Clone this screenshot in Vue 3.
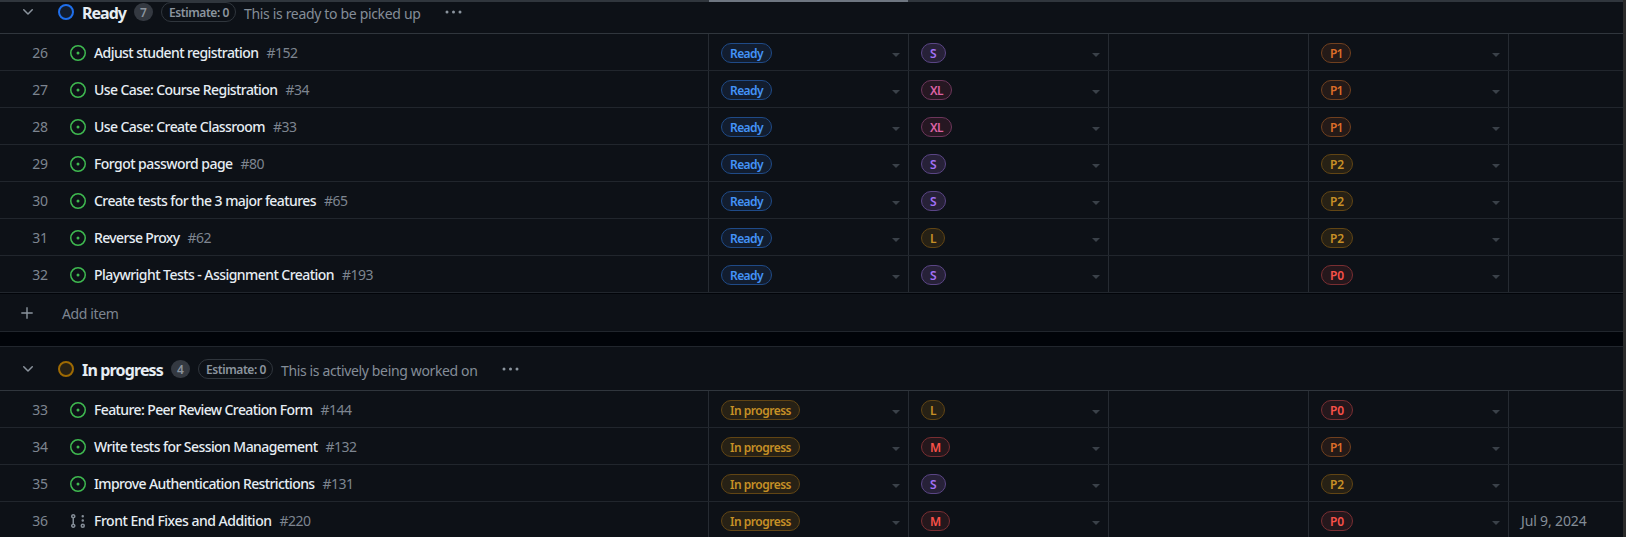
<script setup>
const groups = [
  {
    name: 'Ready', nameW: 44, tone: 'blue', count: 7, note: 'This is ready to be picked up', noteW: 176.5, add: true, pillW: 51, statusW: 33,
    items: [
      { n: 26, title: 'Adjust student registration', w: 164.5, id: 152, size: 'S', prio: 'P1' },
      { n: 27, title: 'Use Case: Course Registration', w: 183.5, id: 34, size: 'XL', prio: 'P1' },
      { n: 28, title: 'Use Case: Create Classroom', w: 171, id: 33, size: 'XL', prio: 'P1' },
      { n: 29, title: 'Forgot password page', w: 138.5, id: 80, size: 'S', prio: 'P2' },
      { n: 30, title: 'Create tests for the 3 major features', w: 222, id: 65, size: 'S', prio: 'P2' },
      { n: 31, title: 'Reverse Proxy', w: 85.5, id: 62, size: 'L', prio: 'P2' },
      { n: 32, title: 'Playwright Tests - Assignment Creation', w: 240, id: 193, size: 'S', prio: 'P0' },
    ],
  },
  {
    name: 'In progress', nameW: 81, tone: 'yellow', count: 4, note: 'This is actively being worked on', noteW: 196.5, add: false, pillW: 79, statusW: 61,
    items: [
      { n: 33, title: 'Feature: Peer Review Creation Form', w: 218.5, id: 144, size: 'L', prio: 'P0' },
      { n: 34, title: 'Write tests for Session Management', w: 223.5, id: 132, size: 'M', prio: 'P1' },
      { n: 35, title: 'Improve Authentication Restrictions', w: 220.5, id: 131, size: 'S', prio: 'P2' },
      { n: 36, title: 'Front End Fixes and Addition', w: 177.5, id: 220, size: 'M', prio: 'P0', draft: true, date: 'Jul 9, 2024' },
    ],
  },
]

const labels = {
  S: { tone: 'purple', box: 25, text: 7 },
  XL: { tone: 'pink', box: 31, text: 13 },
  L: { tone: 'yellow', box: 24, text: 6 },
  M: { tone: 'red', box: 29, text: 11 },
  P0: { tone: 'red', box: 32, text: 14 },
  P1: { tone: 'orange', box: 30, text: 12.5 },
  P2: { tone: 'yellow', box: 32, text: 14 },
}

// Spreads the letters of a label so that it fills the given width.
const vFit = {
  mounted(el, { value }) {
    const natural = el.getBoundingClientRect().width
    const gap = (value - natural) / el.textContent.length
    el.style.letterSpacing = gap.toFixed(3) + 'px'
  },
}

function cells(group, item) {
  return [
    { text: group.name, tone: group.tone, box: group.pillW, w: group.statusW },
    { text: item.size, tone: labels[item.size].tone, box: labels[item.size].box, w: labels[item.size].text },
    { text: '' },
    { text: item.prio, tone: labels[item.prio].tone, box: labels[item.prio].box, w: labels[item.prio].text },
  ]
}
</script>

<template>
  <div class="board">
    <div class="scroll-head"><div class="scroll-mark"></div></div>
    <section v-for="g in groups" :key="g.name" class="group">
      <header class="group-head">
        <svg class="chevron" width="16" height="16" viewBox="0 0 16 16"><path d="M12.78 5.22a.749.749 0 0 1 0 1.06l-4.25 4.25a.749.749 0 0 1-1.06 0L3.22 6.28a.749.749 0 1 1 1.06-1.06L8 8.939l3.72-3.719a.749.749 0 0 1 1.06 0Z" /></svg>
        <span class="ring" :class="g.tone"></span>
        <span class="name"><span v-fit="g.nameW">{{ g.name }}</span></span>
        <span class="count">{{ g.count }}</span>
        <span class="estimate"><span v-fit="60">Estimate: 0</span></span>
        <span class="note"><span v-fit="g.noteW">{{ g.note }}</span></span>
        <svg class="dots" width="18" height="4" viewBox="0 0 18 4"><circle cx="2" cy="2" r="1.5" /><circle cx="8.5" cy="2" r="1.5" /><circle cx="15" cy="2" r="1.5" /></svg>
      </header>
      <div v-for="item in g.items" :key="item.n" class="row">
        <div class="title-cell">
          <span class="num"><span v-fit="15.2">{{ item.n }}</span></span>
          <svg v-if="item.draft" class="state draft" width="16" height="16" viewBox="0 0 16 16"><path d="M3.25 1A2.25 2.25 0 0 1 4 5.372v5.256a2.251 2.251 0 1 1-1.5 0V5.372A2.251 2.251 0 0 1 3.25 1Zm9.5 14a2.25 2.25 0 1 1 0-4.5 2.25 2.25 0 0 1 0 4.5ZM2.5 3.25a.75.75 0 1 0 1.5 0 .75.75 0 0 0-1.5 0ZM3.25 12a.75.75 0 1 0 0 1.5.75.75 0 0 0 0-1.5Zm9.5 0a.75.75 0 1 0 0 1.5.75.75 0 0 0 0-1.5ZM14 7.5a1.25 1.25 0 1 1-2.5 0 1.25 1.25 0 0 1 2.5 0Zm0-4.25a1.25 1.25 0 1 1-2.5 0 1.25 1.25 0 0 1 2.5 0Z" /></svg>
          <svg v-else class="state open" width="16" height="16" viewBox="0 0 16 16"><path d="M8 9.5a1.5 1.5 0 1 0 0-3 1.5 1.5 0 0 0 0 3Z" /><path d="M8 0a8 8 0 1 1 0 16A8 8 0 0 1 8 0ZM1.5 8a6.5 6.5 0 1 0 13 0 6.5 6.5 0 0 0-13 0Z" /></svg>
          <span class="title"><span v-fit="item.w">{{ item.title }}</span></span>
          <span class="id"><span v-fit="item.id > 99 ? 31 : 23.5">#{{ item.id }}</span></span>
        </div>
        <div v-for="(c, i) in cells(g, item)" :key="i" class="cell">
          <template v-if="c.text">
            <span class="pill" :class="c.tone" :style="{ width: c.box + 'px' }"><span v-fit="c.w">{{ c.text }}</span></span>
            <svg class="arrow" width="8" height="4" viewBox="0 0 8 4"><path d="M0 0H8L4 4Z" /></svg>
          </template>
        </div>
        <div class="cell last"><span v-if="item.date" class="date"><span v-fit="65.5">{{ item.date }}</span></span></div>
      </div>
      <div v-if="g.add" class="add">
        <svg class="plus" width="12" height="12" viewBox="0 0 12 12"><path d="M6 .3V11.7M.3 6H11.7" /></svg>
        <span class="add-label"><span v-fit="56.5">Add item</span></span>
      </div>
    </section>
  </div>
</template>

<style>
html, body { background: #010409; overflow: hidden; }
</style>

<style scoped>
.board {
  box-sizing: border-box;
  width: 1626px;
  height: 537px;
  overflow: hidden;
  background: #010409;
  border-right: 3px solid #2b2b2b;
  font-family: "Noto Sans", "Open Sans", sans-serif;
  font-size: 14px;
  color: #e6edf3;
  white-space: nowrap;
}
.board span { white-space: pre; }
.scroll-head { position: relative; z-index: 1; height: 2px; background: #30363d; }
.scroll-mark { width: 199px; height: 2px; margin-left: 709px; background: #6e7681; }
.group { background: #0d1117; }
.group:nth-of-type(1) { margin-top: -12px; }
.group + .group { margin-top: 14px; border-top: 1px solid #21262d; }
.group-head { display: flex; align-items: center; height: 43px; border-bottom: 1px solid #30363d; }
.chevron { margin-left: 20px; fill: #8b949e; }
.ring { box-sizing: border-box; width: 16px; height: 16px; margin: 1px 8px 0 22px; border: 2px solid; border-radius: 50%; }
.ring.blue { border-color: #1f6feb; background: #121d2f; }
.ring.yellow { border-color: #9e6a03; background: #272115; }
.name { font-size: 16px; font-weight: 700; line-height: 24px; margin-top: 2px; }
.count { width: 19px; height: 18px; margin: 1px 8px 0; border-radius: 9px; background: #343941; color: #8b949e; font-size: 12px; font-weight: 600; line-height: 19px; text-align: center; }
.estimate { box-sizing: border-box; width: 75px; height: 20px; padding-left: 7px; border: 1px solid #30363d; border-radius: 10px; color: #8b949e; font-size: 12px; font-weight: 600; line-height: 19px; }
.note { margin: 4px 0 0 8px; color: #848d97; line-height: 20px; }
.dots { margin-left: 24px; fill: #8b949e; }
.row { display: flex; height: 36px; border-bottom: 1px solid #21262d; }
.title-cell { display: flex; align-items: center; width: 708px; }
.num { width: 47.5px; margin: 2px 0.5px 0 0; text-align: right; color: #7d8590; line-height: 20px; }
.state { margin: 2px 8px 0 22px; }
.state.open { fill: #3fb950; }
.state.draft { fill: #848d97; }
.title { margin-top: 2px; line-height: 20px; font-weight: 500; }
.id { margin: 2px 0 0 8px; color: #7d8590; line-height: 20px; }
.cell { box-sizing: border-box; display: flex; align-items: center; width: 200px; padding: 0 8px 0 12px; border-left: 1px solid #262b32; }
.cell.last { flex: 1; }
.date { margin-top: 2px; color: #848d97; line-height: 20px; }
.pill { box-sizing: border-box; height: 20px; margin-top: 2px; padding-left: 8px; border: 1px solid; border-radius: 10px; font-size: 12px; font-weight: 600; line-height: 20px; }
.pill.blue { color: #4493f8; background: #121d2f; border-color: #1f4a87; }
.pill.purple { color: #a371f7; background: #272138; border-color: #5a4585; }
.pill.pink { color: #db61a2; background: #261722; border-color: #6d365b; }
.pill.yellow { color: #c69026; background: #272115; border-color: #614514; }
.pill.red { color: #f85149; background: #25171c; border-color: #792e32; }
.pill.orange { color: #db6d28; background: #241a18; border-color: #70401f; }
.arrow { margin: 5px 0 0 auto; fill: #3a4149; }
.add { display: flex; align-items: center; height: 37px; border-top: 1px solid #010409; border-bottom: 1px solid #21262d; }
.plus { margin-left: 21px; fill: none; stroke: #8b949e; stroke-width: 1.4; }
.add-label { margin: 2px 0 0 29px; color: #7d8590; line-height: 20px; }
</style>
